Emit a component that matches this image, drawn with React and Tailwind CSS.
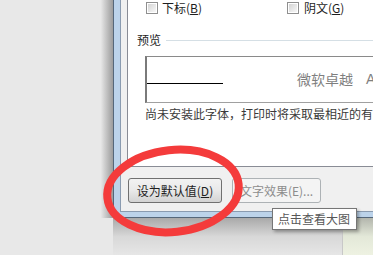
import React from "react";

function Checkbox() {
  return (
    <span className="flex h-[12px] w-[12px] shrink-0 items-center justify-center border border-[#8f8f8f] bg-white">
      <span className="h-[8px] w-[8px] bg-gradient-to-br from-[#d4d4d4] to-[#f7f7f7]" />
    </span>
  );
}

function Win7Button({ children, disabled, className }) {
  return (
    <div
      className={
        "flex h-[25px] items-center justify-center rounded-[3px] border " +
        (disabled
          ? "border-[#adb2b5] bg-[#f4f4f4] text-[#8d8d8d] "
          : "border-[#707070] bg-gradient-to-b from-[#f2f2f2] via-[#e9e9e9] to-[#d3d3d3] text-[#1e1e1e] ") +
        className
      }
    >
      <span className="text-[12px] leading-[16px]">{children}</span>
    </div>
  );
}

export default function App() {
  return (
    <div className="relative h-[255px] w-[373px] overflow-hidden bg-[#e8e8e8] font-['Noto_Sans_CJK_SC',sans-serif]">
      {/* dialog + left shadow */}
      <div className="flex h-[218px]">
        <div className="w-[101px] shrink-0" />
        <div className="w-[12px] shrink-0 bg-gradient-to-r from-[#e6e6e6] to-[#9c9c9c]" />

        {/* window frame */}
        <div className="flex flex-1 border-b border-l border-[#55677a] bg-[#bcd3ea] pb-[5px] pl-[6px]">
          <div className="flex flex-1 flex-col border-b border-l border-[#8a9bb0] bg-[#f0f0f0] pl-[6px]">
            {/* tab page */}
            <div className="flex h-[167px] flex-col border-b border-l border-[#898c95] bg-white">
              {/* effects row */}
              <div className="flex h-[15px] items-center pl-[18px] text-[12px] leading-[16px] text-[#1e1e1e]">
                <div className="flex w-[141px] items-center gap-[4px]">
                  <Checkbox />
                  <span>
                    下标(<u>B</u>)
                  </span>
                </div>
                <div className="flex items-center gap-[5px]">
                  <Checkbox />
                  <span>
                    阴文(<u>G</u>)
                  </span>
                </div>
              </div>

              {/* preview label */}
              <div className="mt-[17px] flex h-[16px] items-center gap-[5px] pl-[9px]">
                <span className="text-[12px] leading-[16px] text-[#1e1e1e]">预览</span>
                <div className="h-px flex-1 bg-[#d5dfe5]" />
              </div>

              {/* preview box */}
              <div className="ml-[17px] mt-[8px] flex h-[47px] border-b border-l-2 border-t border-b-[#a0a0a0] border-l-[#7a7a7a] border-t-[#8a8a8a]">
                <div className="mt-[26px] h-px w-[76px] shrink-0 bg-black" />
                <div className="ml-[74px] mt-[12px] flex shrink-0 whitespace-nowrap text-[14px] leading-[20px] text-[#7f7f7f]">
                  <span>微软卓越</span>
                  <span className="ml-[13px] font-['Liberation_Sans',sans-serif]">AaBbCc</span>
                </div>
              </div>

              <div className="ml-[17px] mt-[3px] whitespace-nowrap text-[12px] leading-[16px] text-[#3a3a3a]">
                尚未安装此字体，打印时将采取最相近的有效字体。
              </div>
            </div>

            {/* button strip */}
            <div className="flex gap-[10px] pl-[1px] pt-[11px]">
              <Win7Button className="w-[94px]">
                设为默认值(<u>D</u>)
              </Win7Button>
              <Win7Button disabled className="w-[89px]">
                文字效果(E)...
              </Win7Button>
            </div>
          </div>
        </div>
      </div>

      {/* area below the dialog */}
      <div className="flex h-[37px]">
        <div className="w-[113px] shrink-0" />
        <div className="w-[229px] shrink-0 bg-gradient-to-b from-[#a9a9a9] via-[#d8d8d8] to-[#e6e6e6]" />
        <div className="w-px shrink-0 bg-[#c8c8c8]" />
        <div className="flex-1 bg-gradient-to-b from-[#b3b6ad] via-[#e3e8d8] to-[#eef2e2]" />
      </div>

      {/* tooltip */}
      <div className="absolute left-[272px] top-[208px] flex h-[22px] w-[85px] items-center border border-[#767676] bg-white pl-[5px] text-[12px] leading-[16px] text-[#575757] shadow-[2px_2px_3px_rgba(0,0,0,0.3)]">
        点击查看大图
      </div>

      {/* red hand-drawn circle */}
      <svg className="pointer-events-none absolute left-0 top-0" width="373" height="255" viewBox="0 0 373 255">
        <ellipse
          cx="173"
          cy="191"
          rx="66"
          ry="41"
          fill="none"
          stroke="#f43b3b"
          strokeWidth="8"
          transform="rotate(-6 173 191)"
        />
      </svg>
    </div>
  );
}
